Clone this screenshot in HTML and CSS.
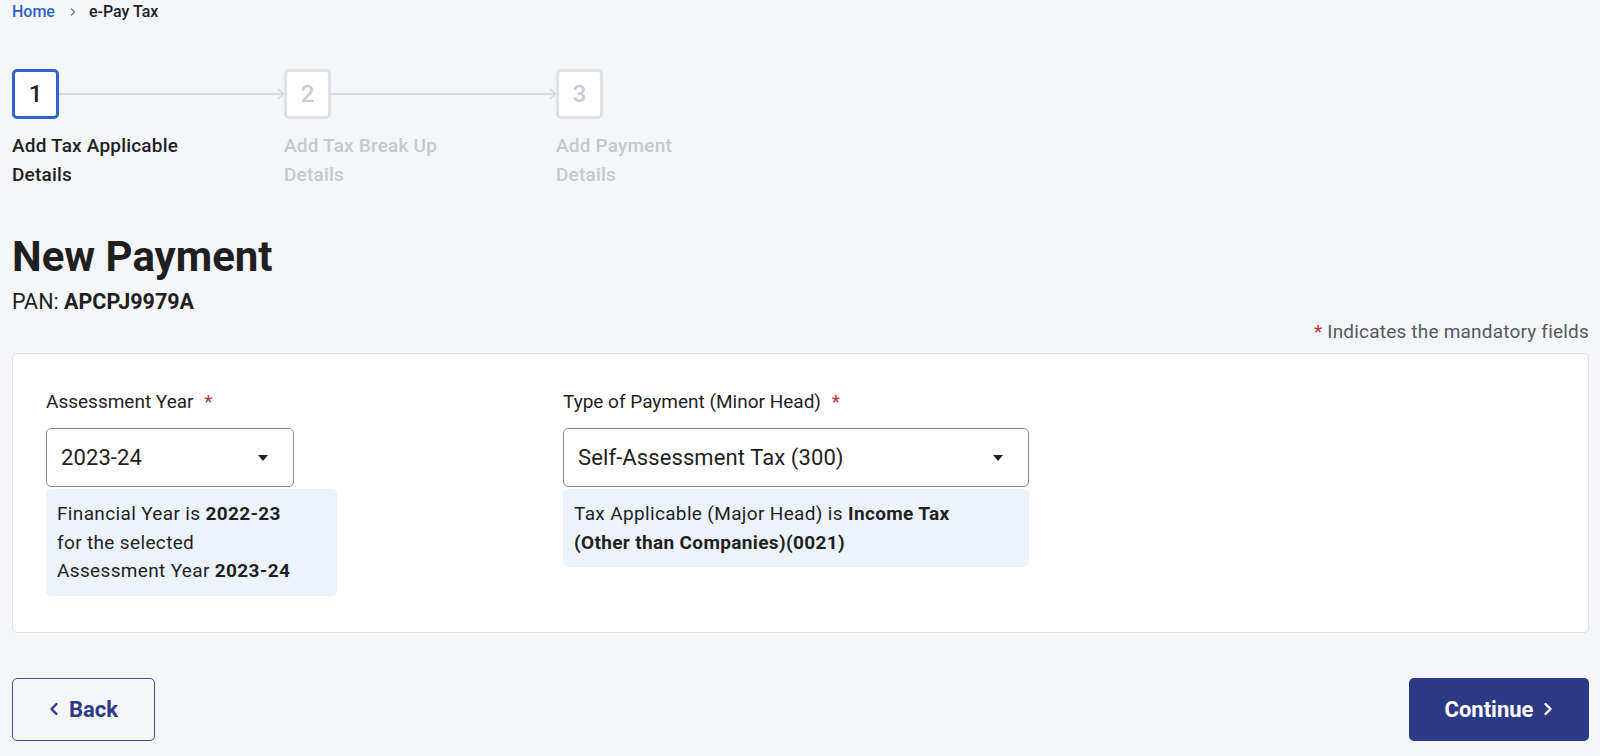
FILE: index.html
```html
<!DOCTYPE html>
<html lang="en">
<head>
<meta charset="utf-8">
<title>e-Pay Tax - New Payment</title>
<link rel="stylesheet" href="styles.css">
</head>
<body>
<div class="page">
  <nav class="crumbs">
    <a class="crumb-link" href="#">Home</a>
    <svg class="crumb-sep" width="8" height="10" viewBox="0 0 8 10"><path d="M2 1.5 L5.5 5 L2 8.5" fill="none" stroke="#777" stroke-width="1.4"/></svg>
    <span class="crumb-current">e-Pay Tax</span>
  </nav>

  <ol class="stepper">
    <li class="step active">
      <div class="step-head">
        <span class="step-num">1</span>
        <span class="connector"><svg class="arrow" width="8" height="12" viewBox="0 0 8 12"><path d="M1 1 L6.5 6 L1 11" fill="none" stroke="#d6d9df" stroke-width="1.6"/></svg></span>
      </div>
      <div class="step-label">Add Tax Applicable<br>Details</div>
    </li>
    <li class="step">
      <div class="step-head">
        <span class="step-num">2</span>
        <span class="connector"><svg class="arrow" width="8" height="12" viewBox="0 0 8 12"><path d="M1 1 L6.5 6 L1 11" fill="none" stroke="#d6d9df" stroke-width="1.6"/></svg></span>
      </div>
      <div class="step-label">Add Tax Break Up<br>Details</div>
    </li>
    <li class="step last">
      <div class="step-head">
        <span class="step-num">3</span>
      </div>
      <div class="step-label">Add Payment<br>Details</div>
    </li>
  </ol>

  <h1 class="title">New Payment</h1>
  <p class="pan">PAN: <b>APCPJ9979A</b></p>
  <p class="mandatory"><span class="req">*</span> Indicates the mandatory fields</p>

  <section class="card">
    <div class="field field-ay">
      <label class="field-label">Assessment Year <span class="req">*</span></label>
      <div class="select select-ay">
        <span>2023-24</span>
        <svg class="caret" width="10" height="6" viewBox="0 0 10 6"><path d="M0 0 H10 L5 6 Z" fill="#222"/></svg>
      </div>
      <div class="info info-ay">Financial Year is <b>2022-23</b><br>for the selected<br>Assessment Year <b>2023-24</b></div>
    </div>
    <div class="field field-type">
      <label class="field-label">Type of Payment (Minor Head) <span class="req">*</span></label>
      <div class="select select-type">
        <span>Self-Assessment Tax (300)</span>
        <svg class="caret" width="10" height="6" viewBox="0 0 10 6"><path d="M0 0 H10 L5 6 Z" fill="#222"/></svg>
      </div>
      <div class="info info-type">Tax Applicable (Major Head) is <b>Income Tax<br>(Other than Companies)(0021)</b></div>
    </div>
  </section>

  <div class="actions">
    <button class="btn btn-back" type="button">
      <svg width="10" height="14" viewBox="0 0 10 14"><path d="M7.5 2 L2.5 7 L7.5 12" fill="none" stroke="currentColor" stroke-width="2.4" stroke-linecap="round" stroke-linejoin="round"/></svg>
      <span>Back</span>
    </button>
    <button class="btn btn-continue" type="button">
      <span>Continue</span>
      <svg width="10" height="14" viewBox="0 0 10 14"><path d="M2.5 2 L7.5 7 L2.5 12" fill="none" stroke="currentColor" stroke-width="2.4" stroke-linecap="round" stroke-linejoin="round"/></svg>
    </button>
  </div>
</div>
</body>
</html>
```

FILE: styles.css
```css
* { box-sizing: border-box; }

html, body {
  margin: 0;
  padding: 0;
  background: #f5f6fa;
}

body {
  font-family: Roboto, "Liberation Sans", Arial, sans-serif;
  color: #1f1f1f;
}

.page {
  padding: 0 11px 0 12px;
}

/* breadcrumb */
.crumbs {
  display: flex;
  align-items: center;
  height: 24px;
  font-size: 16px;
  line-height: 24px;
}
.crumb-link {
  color: #2e63c3;
  text-decoration: none;
  font-weight: 500;
}
.crumb-sep {
  margin: 0 12px 0 14px;
}
.crumb-current {
  font-weight: 500;
  color: #1f1f1f;
}

/* stepper */
.stepper {
  list-style: none;
  margin: 45px 0 0;
  padding: 0;
  display: flex;
}
.step {
  width: 272px;
}
.step.last {
  width: 200px;
}
.step-head {
  display: flex;
  align-items: center;
  height: 50px;
}
.step-num {
  flex: none;
  width: 47px;
  height: 50px;
  border: 3px solid #dfe1e6;
  border-radius: 5px;
  background: #fff;
  display: flex;
  align-items: center;
  justify-content: center;
  font-size: 24px;
  font-weight: 500;
  color: #c9ccd3;
}
.step.active .step-num {
  border-color: #2f66cc;
  color: #1f1f1f;
}
.connector {
  flex: 1;
  position: relative;
  height: 2px;
  background: #d6d9df;
  margin-right: 1px;
}
.connector .arrow {
  position: absolute;
  right: -2px;
  top: -5px;
}
.step-label {
  margin-top: 13px;
  font-size: 19px;
  letter-spacing: 0.2px;
  font-weight: 500;
  line-height: 28.5px;
  color: #c5c8cf;
}
.step.active .step-label {
  color: #1f1f1f;
}

/* heading */
.title {
  margin: 43px 0 0;
  font-size: 42px;
  line-height: 50px;
  font-weight: 700;
  color: #1f1f1f;
}
.pan {
  margin: 8px 0 0;
  font-size: 21.5px;
  line-height: 24px;
}
.pan b {
  font-weight: 700;
}
.mandatory {
  margin: 6px 0 0;
  text-align: right;
  font-size: 19px;
  letter-spacing: 0.2px;
  line-height: 24px;
  color: #555860;
}
.req {
  color: #c62f2f;
}

/* card */
.card {
  margin-top: 9px;
  background: #fff;
  border: 1px solid #dcdee4;
  border-radius: 5px;
  padding: 36px 33px 36px;
  display: flex;
  align-items: flex-start;
}
.field-ay {
  width: 517px;
}
.field-type {
  width: 466px;
}
.field-label {
  display: block;
  font-size: 19px;
  line-height: 24px;
  color: #1f1f1f;
}
.field-label .req {
  margin-left: 6px;
}
.select {
  margin-top: 14px;
  height: 59px;
  border: 1px solid #8c8c8c;
  border-radius: 5px;
  background: #fff;
  display: flex;
  align-items: center;
  justify-content: space-between;
  padding: 0 25px 0 14px;
  font-size: 22px;
  letter-spacing: 0.1px;
  color: #1f1f1f;
}
.select-ay {
  width: 248px;
}
.select-type {
  width: 466px;
}
.info {
  margin-top: 2px;
  background: #edf3fc;
  border-radius: 5px;
  padding: 11px 11px 10px;
  font-size: 19px;
  letter-spacing: 0.35px;
  line-height: 28.5px;
  color: #1f1f1f;
}
.info b {
  font-weight: 700;
}
.info-ay {
  width: 291px;
}
.info-type {
  width: 466px;
}

/* actions */
.actions {
  margin-top: 45px;
  display: flex;
  justify-content: space-between;
}
.btn {
  height: 63px;
  border-radius: 5px;
  display: flex;
  align-items: center;
  justify-content: center;
  gap: 10px;
  font-family: Roboto, "Liberation Sans", Arial, sans-serif;
  font-size: 22px;
  font-weight: 700;
  cursor: pointer;
}
.btn-back {
  width: 143px;
  background: transparent;
  border: 1.5px solid #3e4c9c;
  color: #2c3a88;
}
.btn-continue {
  width: 180px;
  background: #2c3985;
  border: none;
  color: #fff;
}
```
